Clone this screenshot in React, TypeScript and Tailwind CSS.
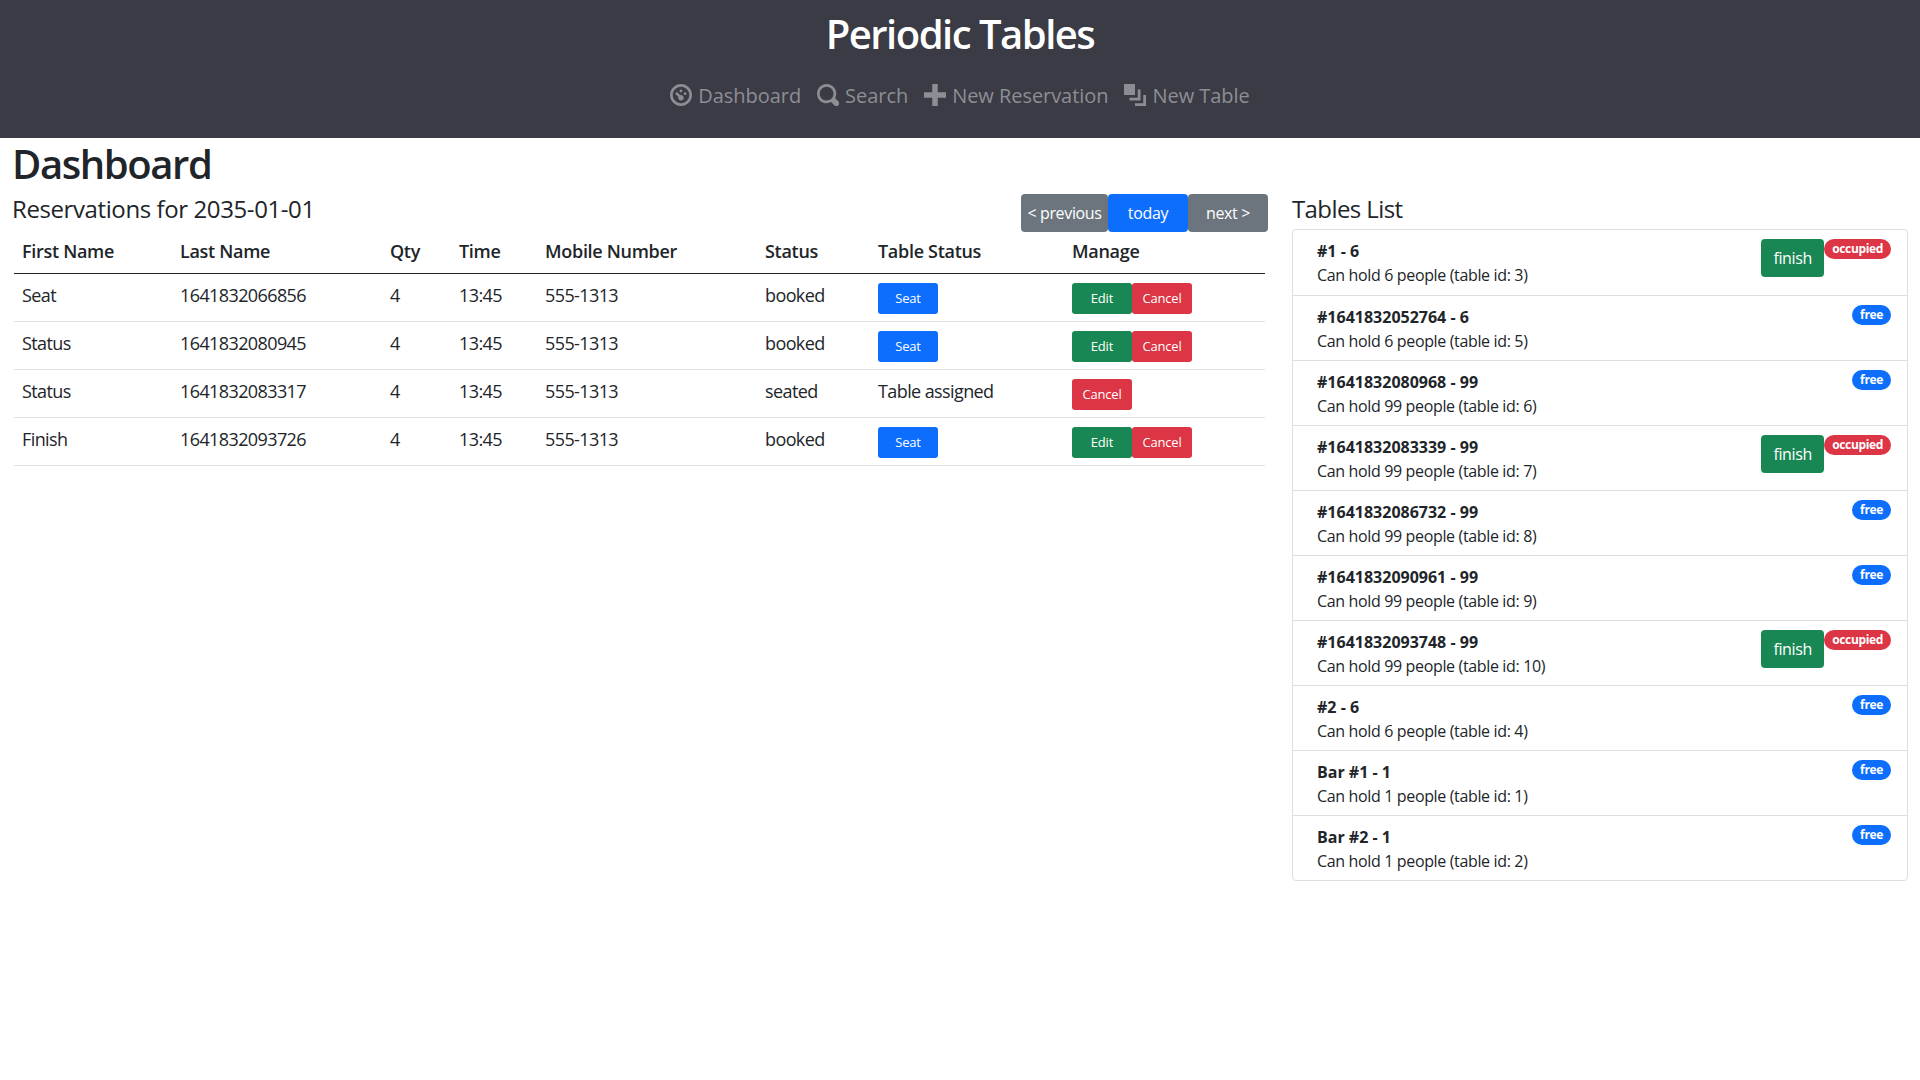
const font = { fontFamily: "'Open Sans','Noto Sans',sans-serif" };

function IconDash() {
  return (
    <svg width="22" height="22" viewBox="0 0 8 8" fill="currentColor">
      <path fillRule="evenodd" d="M4 0C1.8 0 0 1.8 0 4s1.8 4 4 4 4-1.8 4-4-1.8-4-4-4zm0 1c1.66 0 3 1.34 3 3S5.66 7 4 7 1 5.66 1 4s1.34-3 3-3zm0 1c-.28 0-.5.22-.5.5S3.72 3 4 3s.5-.22.5-.5S4.28 2 4 2zM2.34 3a.5.5 0 0 0-.19.84l.91.91c-.02.08-.06.16-.06.25 0 .55.45 1 1 1s1-.45 1-1-.45-1-1-1c-.09 0-.17.04-.25.06l-.91-.91a.5.5 0 0 0-.44-.16l-.06.01zM5.5 3c-.28 0-.5.22-.5.5s.22.5.5.5.5-.22.5-.5-.22-.5-.5-.5z" />
    </svg>
  );
}
function IconSearch() {
  return (
    <svg width="22" height="22" viewBox="0 0 8 8" fill="currentColor">
      <path fillRule="evenodd" d="M3.5 0C1.57 0 0 1.57 0 3.5S1.57 7 3.5 7c.59 0 1.17-.14 1.66-.41a1 1 0 0 0 .13.13l1 1a1.02 1.02 0 1 0 1.44-1.44l-1-1a1 1 0 0 0-.16-.13c.27-.49.44-1.06.44-1.66C7 1.56 5.44 0 3.5 0zm0 1C4.89 1 6 2.11 6 3.5c0 .66-.24 1.27-.66 1.72l-.03.03a1 1 0 0 0-.13.13c-.44.4-1.04.63-1.69.63C2.1 6.01.99 4.9.99 3.51s1.11-2.5 2.5-2.5z" />
    </svg>
  );
}
function IconPlus() {
  return (
    <svg width="22" height="22" viewBox="0 0 8 8" fill="currentColor">
      <path d="M3 0v3H0v2h3v3h2V5h3V3H5V0H3z" />
    </svg>
  );
}
function IconLayers() {
  return (
    <svg width="22" height="22" viewBox="0 0 8 8" fill="currentColor">
      <path d="M0 0v4h4V0H0zm5 2v3H2v1h4V2H5zm2 2v3H4v1h4V4H7z" />
    </svg>
  );
}

const reservations = [
  { first: "Seat", last: "1641832066856", status: "booked" },
  { first: "Status", last: "1641832080945", status: "booked" },
  { first: "Status", last: "1641832083317", status: "seated" },
  { first: "Finish", last: "1641832093726", status: "booked" },
];

const tables = [
  ["#1 - 6", "Can hold 6 people (table id: 3)", true],
  ["#1641832052764 - 6", "Can hold 6 people (table id: 5)", false],
  ["#1641832080968 - 99", "Can hold 99 people (table id: 6)", false],
  ["#1641832083339 - 99", "Can hold 99 people (table id: 7)", true],
  ["#1641832086732 - 99", "Can hold 99 people (table id: 8)", false],
  ["#1641832090961 - 99", "Can hold 99 people (table id: 9)", false],
  ["#1641832093748 - 99", "Can hold 99 people (table id: 10)", true],
  ["#2 - 6", "Can hold 6 people (table id: 4)", false],
  ["Bar #1 - 1", "Can hold 1 people (table id: 1)", false],
  ["Bar #2 - 1", "Can hold 1 people (table id: 2)", false],
] as const;

const th = "h-[43px] px-2 text-left font-semibold border-b border-[#212529] tracking-[-0.3px]";
const td = "h-[48px] px-2 py-2 border-b border-[#dee2e6] align-top";
const sm = "inline-flex items-center justify-center w-[60px] h-[31px] rounded-[3px] text-[13px] text-white tracking-[-0.2px]";

function Nav({ icon, label }: { icon: React.ReactNode; label: string }) {
  return (
    <a className="flex items-center gap-[6px] text-[#8d8e94]">
      <span className="-mt-[3px]">{icon}</span>
      <span>{label}</span>
    </a>
  );
}

export default function App() {
  return (
    <div className="min-h-[1080px] bg-white text-[#212529] text-[16px] leading-6 tracking-[-0.35px]" style={font}>
      <header className="h-[138px] bg-[#3a3b45] pt-[10px] flex flex-col items-center">
        <h1 className="text-[40px] leading-[48px] font-semibold text-white tracking-[-1.5px]">Periodic Tables</h1>
        <nav className="flex gap-4 mt-[23px] text-[20px] leading-[30px] tracking-[-0.05px]">
          <Nav icon={<IconDash />} label="Dashboard" />
          <Nav icon={<IconSearch />} label="Search" />
          <Nav icon={<IconPlus />} label="New Reservation" />
          <Nav icon={<IconLayers />} label="New Table" />
        </nav>
      </header>
      <main className="flex px-3">
        <section className="w-[1256px] shrink-0">
          <h1 className="text-[40px] leading-[48px] font-[550] tracking-[-1.4px] mt-[2px]">Dashboard</h1>
          <div className="flex justify-between items-start h-[38px] mt-[4px]">
            <h4 className="text-[24px] leading-[29px] font-medium mt-[2px] tracking-[-0.4px]">Reservations for 2035-01-01</h4>
            <div className="flex text-white h-[38px] mt-[2px]">
              <button className="w-[87px] bg-[#6c757d] rounded-[4px]">&lt; previous</button>
              <button className="w-[80px] bg-[#0d6efd] rounded-[4px]">today</button>
              <button className="w-[80px] bg-[#6c757d] rounded-[4px]">next &gt;</button>
            </div>
          </div>
          <table className="w-[1251px] ml-[2px] table-fixed border-collapse text-[18px] leading-[27px] tracking-[-0.6px]">
            <colgroup>
              <col className="w-[158px]" />
              <col className="w-[210px]" />
              <col className="w-[69px]" />
              <col className="w-[86px]" />
              <col className="w-[220px]" />
              <col className="w-[113px]" />
              <col className="w-[194px]" />
              <col className="w-[201px]" />
            </colgroup>
            <thead>
              <tr>
                {["First Name", "Last Name", "Qty", "Time", "Mobile Number", "Status", "Table Status", "Manage"].map((h) => (
                  <th key={h} className={th}>{h}</th>
                ))}
              </tr>
            </thead>
            <tbody>
              {reservations.map((r) => (
                <tr key={r.last}>
                  <td className={td}>{r.first}</td>
                  <td className={td}>{r.last}</td>
                  <td className={td}>4</td>
                  <td className={td}>13:45</td>
                  <td className={td}>555-1313</td>
                  <td className={td}>{r.status}</td>
                  <td className={td}>
                    {r.status === "booked" ? (
                      <div className="flex mt-px -mb-px">
                        <button className={`${sm} bg-[#0d6efd]`}>Seat</button>
                      </div>
                    ) : (
                      "Table assigned"
                    )}
                  </td>
                  <td className={td}>
                    <div className="flex mt-px -mb-px">
                      {r.status === "booked" && <button className={`${sm} bg-[#198754]`}>Edit</button>}
                      <button className={`${sm} bg-[#dc3545]`}>Cancel</button>
                    </div>
                  </td>
                </tr>
              ))}
            </tbody>
          </table>
        </section>
        <section className="w-[616px] ml-[24px] mt-[51px] shrink-0">
          <h4 className="text-[24px] leading-[40px] font-medium tracking-[-0.6px]">Tables List</h4>
          <ul className="border border-[#dfdfdf] rounded-[4px]">
            {tables.map(([title, sub, occ], i) => (
              <li key={title} className={`h-[65px] flex items-start pl-[24px] pr-[16px] pt-[9px] ${i ? "border-t border-[#dfdfdf]" : ""}`}>
                <div className="flex-1">
                  <div className="font-bold tracking-[0px]">{title}</div>
                  <div>{sub}</div>
                </div>
                {occ && (
                  <button className="w-[63px] h-[38px] rounded-[4px] bg-[#198754] text-white">finish</button>
                )}
                <span className={`h-[20px] rounded-full text-white text-[12px] font-bold leading-[20px] px-[8px] ${occ ? "bg-[#dc3545]" : "bg-[#0d6efd]"}`}>
                  {occ ? "occupied" : "free"}
                </span>
              </li>
            ))}
          </ul>
        </section>
      </main>
    </div>
  );
}
